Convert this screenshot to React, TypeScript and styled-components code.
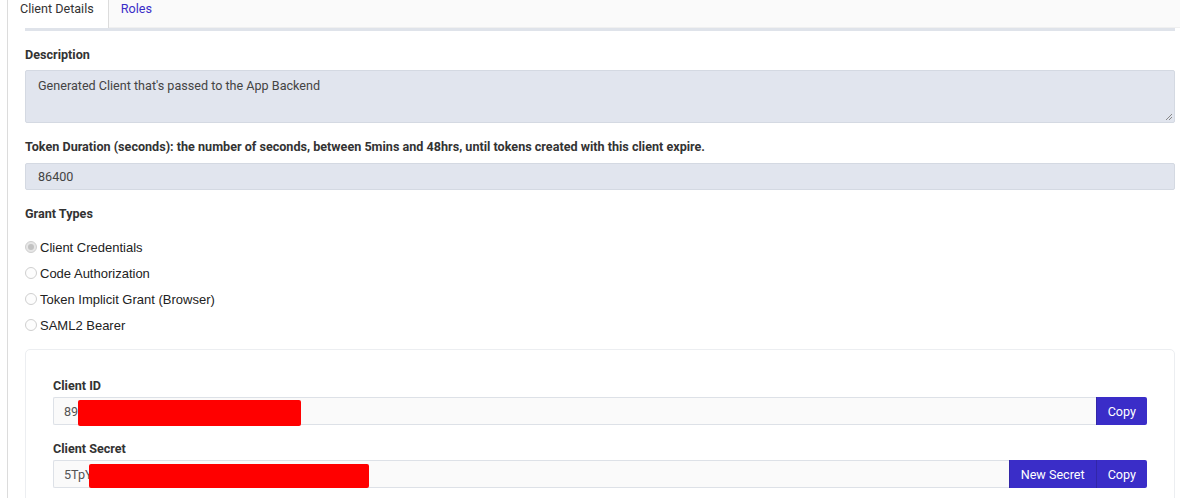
import React from 'react';
import styled, { createGlobalStyle } from 'styled-components';

const GlobalStyle = createGlobalStyle`
  html, body {
    margin: 0;
    padding: 0;
    background: #fff;
    font-family: Roboto, "Liberation Sans", Arial, sans-serif;
    color: #333;
  }
`;

const GRANT_TYPES = [
  'Client Credentials',
  'Code Authorization',
  'Token Implicit Grant (Browser)',
  'SAML2 Bearer',
];

export default function App() {
  return (
    <>
      <GlobalStyle />
      <Page>
        <TabBar>
          <Tab active>Client Details</Tab>
          <Tab>Roles</Tab>
        </TabBar>
        <TabShadow />
        <Content>
          <Group>
            <Label>Description</Label>
            <TextArea>
              Generated Client that's passed to the App Backend
              <ResizeHandle viewBox="0 0 10 10">
                <path d="M9 3 L3 9 M9 6 L6 9" stroke="#888" strokeWidth="1" />
              </ResizeHandle>
            </TextArea>
          </Group>
          <Group>
            <Label>
              Token Duration (seconds): the number of seconds, between 5mins and
              48hrs, until tokens created with this client expire.
            </Label>
            <Field>86400</Field>
          </Group>
          <Label>Grant Types</Label>
          <RadioList>
            {GRANT_TYPES.map((g, i) => (
              <RadioRow key={g}>
                <Radio checked={i === 0} />
                {g}
              </RadioRow>
            ))}
          </RadioList>
          <Panel>
            <PanelGroup>
              <Label tight>Client ID</Label>
              <InputGroup>
                <CodeField>
                  89
                  <Redact w={223} h={26} />
                </CodeField>
                <Button last>Copy</Button>
              </InputGroup>
            </PanelGroup>
            <PanelGroup>
              <Label tight>Client Secret</Label>
              <InputGroup>
                <CodeField>
                  5TpY
                  <Redact w={280} h={24} shift={-4} />
                </CodeField>
                <Button>New Secret</Button>
                <Button last>Copy</Button>
              </InputGroup>
            </PanelGroup>
          </Panel>
        </Content>
      </Page>
    </>
  );
}

const Page = styled.div`
  margin-left: 7px;
  min-height: 498px;
  border-left: 1px solid #dcdcdc;
  box-sizing: border-box;
`;

const TabBar = styled.div`
  display: flex;
  height: 28px;
  background: #fafafa;
  border-bottom: 1px solid #f0f0f0;
  box-sizing: border-box;
`;

const Tab = styled.div<{ active?: boolean }>`
  padding: 1px 14px 0 12px;
  height: 28px;
  box-sizing: border-box;
  font-size: 12.6px;
  line-height: 15px;
  color: ${({ active }) => (active ? '#333' : '#3a2dc8')};
  background: ${({ active }) => (active ? '#fff' : 'transparent')};
  border-right: ${({ active }) => (active ? '1px solid #dcdcdc' : 'none')};
  cursor: pointer;
`;

const TabShadow = styled.div`
  height: 3px;
  margin: 0 5px 0 17px;
  background: #dfe3ea;
`;

const Content = styled.div`
  padding: 16px 5px 0 17px;
`;

const Group = styled.div`
  margin-bottom: 16px;
`;

const Label = styled.div<{ tight?: boolean }>`
  font-size: 12.6px;
  font-weight: 700;
  line-height: 16px;
  color: #333;
  margin-bottom: ${({ tight }) => (tight ? '3px' : '7px')};
`;

const TextArea = styled.div`
  position: relative;
  height: 53px;
  box-sizing: border-box;
  padding: 7px 12px;
  background: #e1e5ee;
  border: 1px solid #d4d9e2;
  border-radius: 2px;
  font-size: 12.6px;
  line-height: 16px;
  color: #444;
`;

const ResizeHandle = styled.svg`
  position: absolute;
  right: 1px;
  bottom: 1px;
  width: 10px;
  height: 10px;
`;

const Field = styled.div`
  display: flex;
  align-items: center;
  height: 27px;
  box-sizing: border-box;
  padding: 0 12px;
  margin-top: 8px;
  background: #e1e5ee;
  border: 1px solid #d4d9e2;
  border-radius: 2px;
  font-size: 12.6px;
  color: #444;
`;

const RadioList = styled.div`
  margin-top: 12px;
`;

const RadioRow = styled.div`
  display: flex;
  align-items: center;
  height: 26px;
  font-family: "Liberation Sans", Arial, sans-serif;
  font-size: 13px;
  color: #222;
`;

const Radio = styled.span<{ checked?: boolean }>`
  position: relative;
  width: 12px;
  height: 12px;
  margin-right: 3px;
  box-sizing: border-box;
  border-radius: 50%;
  border: 1px solid #cfcfcf;
  background: ${({ checked }) => (checked ? '#e6e6e6' : '#fdfdfd')};

  &::after {
    content: '';
    display: ${({ checked }) => (checked ? 'block' : 'none')};
    position: absolute;
    left: 2px;
    top: 2px;
    width: 6px;
    height: 6px;
    border-radius: 50%;
    background: #c2c2c2;
  }
`;

const Panel = styled.div`
  margin-top: 11px;
  padding: 28px 27px 20px;
  border: 1px solid #eceef1;
  border-radius: 5px;
`;

const PanelGroup = styled.div`
  & + & {
    margin-top: 16px;
  }
`;

const InputGroup = styled.div`
  display: flex;
  height: 28px;
`;

const CodeField = styled.div`
  flex: 1;
  display: flex;
  align-items: center;
  box-sizing: border-box;
  padding: 0 10px;
  background: #fafafa;
  border: 1px solid #dde1e7;
  border-right: none;
  border-radius: 2px 0 0 2px;
  font-size: 12.6px;
  color: #555;
  white-space: nowrap;
`;

const Redact = styled.span<{ w: number; h: number; shift?: number }>`
  display: inline-block;
  width: ${({ w }) => w}px;
  height: ${({ h }) => h}px;
  margin-top: 4px;
  margin-left: ${({ shift = 0 }) => shift}px;
  background: #ff0000;
  border-radius: 2px;
`;

const Button = styled.button<{ last?: boolean }>`
  height: 28px;
  padding: 0 11px;
  border: none;
  border-left: 1px solid #3226a8;
  border-radius: ${({ last }) => (last ? '0 2px 2px 0' : '0')};
  background: #3a2dc8;
  color: #fff;
  font-family: Roboto, "Liberation Sans", Arial, sans-serif;
  font-size: 12.6px;
  cursor: pointer;
`;
